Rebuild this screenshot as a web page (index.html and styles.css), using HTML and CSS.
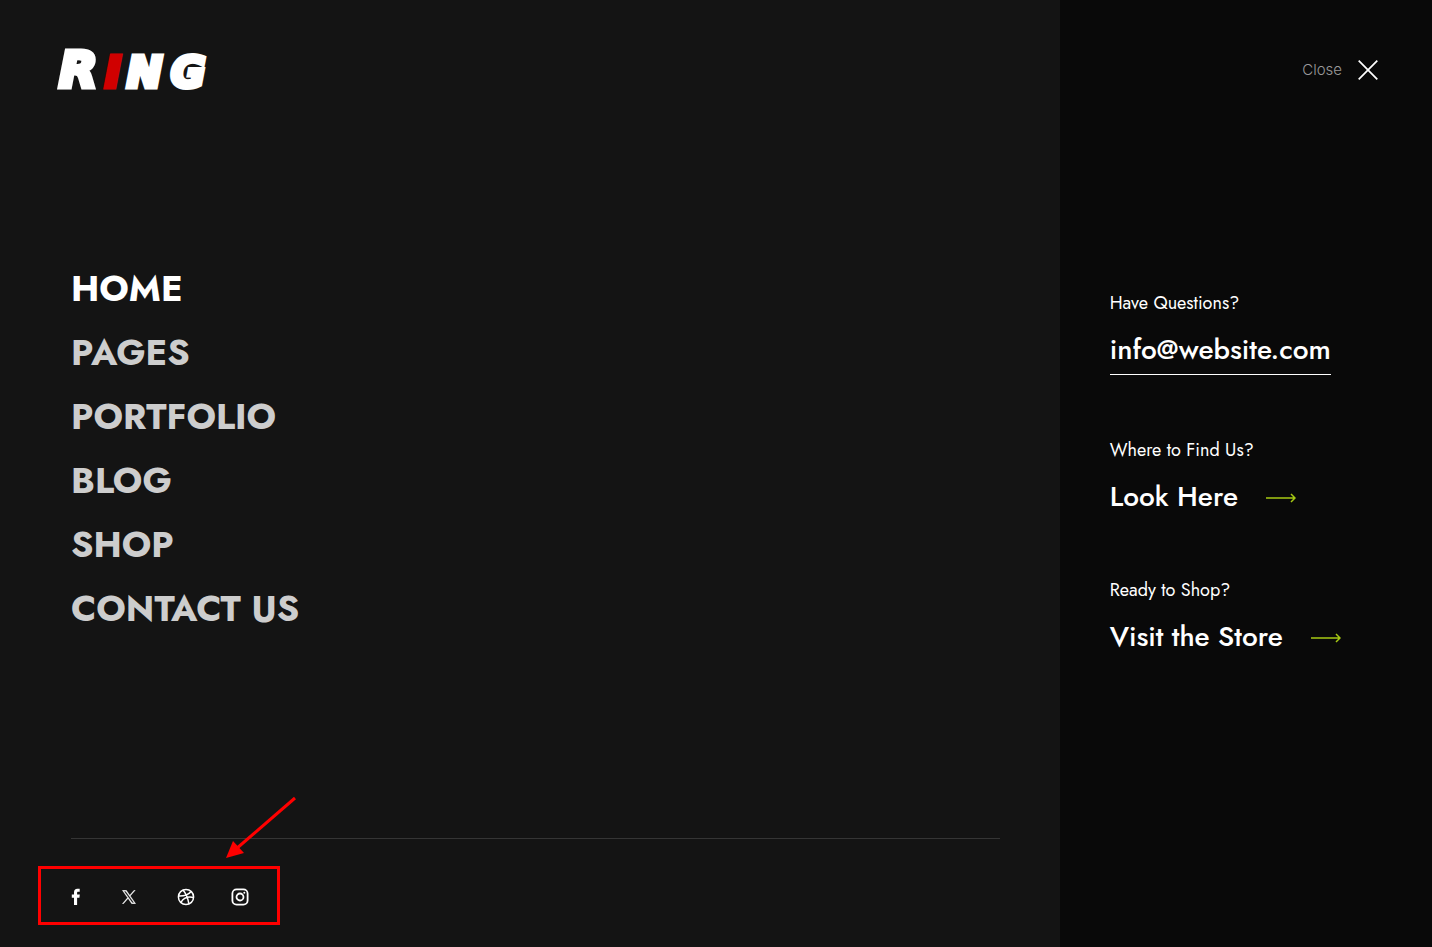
FILE: index.html
```html
<!DOCTYPE html>
<html lang="en">
<head>
<meta charset="utf-8">
<meta name="viewport" content="width=device-width, initial-scale=1">
<title>Ring</title>
<link rel="stylesheet" href="styles.css">
</head>
<body>
<div class="overlay">
  <main class="panel">
    <a class="logo" href="#" aria-label="Ring">
      <svg width="160" height="44" viewBox="0 0 160 44">
        <g class="logo-letters">
          <text class="logo-big" x="4" y="39">R</text>
          <text class="logo-small" x="72" y="39">N</text>
          <text class="logo-small" x="116" y="39">G</text>
          <text class="logo-small logo-red" x="50" y="39">I</text>
        </g>
      </svg>
    </a>
    <nav class="menu">
      <a class="menu-link active" href="#">HOME</a>
      <a class="menu-link" href="#">PAGES</a>
      <a class="menu-link" href="#">PORTFOLIO</a>
      <a class="menu-link" href="#">BLOG</a>
      <a class="menu-link" href="#">SHOP</a>
      <a class="menu-link" href="#">CONTACT US</a>
    </nav>
    <footer class="footer">
      <a class="social" href="#" aria-label="Facebook">
        <svg width="10" height="18" viewBox="0 0 10 18"><path fill="#fff" d="M3 17V9.800H.8V6.500H3V4.500C3 1.900 4.300.8 6.300.8h2.400v3H7.300C6.300 3.800 6.100 4.200 6.100 5v1.500h2.700l-.4 3.300H6.100V17z"/></svg>
      </a>
      <a class="social" href="#" aria-label="X">
        <svg width="14" height="14" viewBox="0 0 24 24"><path fill="#fff" stroke="#fff" stroke-width=".6" d="M14.200 10.200 22.700.5h-2L13.300 8.900 7.400.5H.6l8.900 12.800L.6 23.500h2l7.800-8.900 6.200 8.900h6.800zM3.300 2h3.100l14.300 20h-3.100z"/></svg>
      </a>
      <a class="social" href="#" aria-label="Dribbble">
        <svg width="18" height="18" viewBox="0 0 18 18" fill="none" stroke="#fff" stroke-width="1.500"><circle cx="9" cy="9" r="7.600"/><path d="M6 2.100C8.500 5 10.800 9.500 11.900 15.900M1.500 7.900c5 .2 9.600-.8 12.700-4.500M3.900 14.500C6.500 9.800 11 8.200 16.600 9.500"/></svg>
      </a>
      <a class="social" href="#" aria-label="Instagram">
        <svg width="18" height="18" viewBox="0 0 18 18" fill="none" stroke="#fff" stroke-width="1.800"><rect x="1.400" y="1.400" width="15.200" height="15.200" rx="4.200"/><circle cx="9" cy="9" r="3.500"/><circle cx="13.300" cy="4.700" r="1" fill="#fff" stroke="none"/></svg>
      </a>
      <div class="callout"></div>
      <svg class="pointer" width="72" height="64" viewBox="0 0 72 64"><path d="M70 2 11 53" stroke="#f00" stroke-width="3"/><path fill="#f00" d="M1 62 8 45l11 12z"/></svg>
    </footer>
  </main>
  <aside class="side">
    <button class="close" type="button">
      <span>Close</span>
      <svg width="20" height="20" viewBox="0 0 20 20"><path d="M.7.700 19.300 19.300M19.300.7.700 19.300" stroke="#fff" stroke-width="1.700"/></svg>
    </button>
    <div class="contacts">
      <section>
        <p class="label">Have Questions?</p>
        <a class="big underlined" href="mailto:info@website.com">info@website.com</a>
      </section>
      <section>
        <p class="label">Where to Find Us?</p>
        <a class="big" href="#">Look Here
          <svg width="30" height="12" viewBox="0 0 30 12"><path class="arrow" d="M0 7h29M25 3l4 4-4 4"/></svg></a>
      </section>
      <section>
        <p class="label">Ready to Shop?</p>
        <a class="big" href="#">Visit the Store
          <svg width="30" height="12" viewBox="0 0 30 12"><path class="arrow" d="M0 7h29M25 3l4 4-4 4"/></svg></a>
      </section>
    </div>
  </aside>
</div>
</body>
</html>
```
FILE: styles.css
```css
* { box-sizing: border-box; }
body {
  margin: 0;
  background: #141414;
  color: #fff;
  font-family: Jost, Lato, sans-serif;
}
a { color: inherit; text-decoration: none; }
svg { display: block; flex: none; }
.overlay {
  display: grid;
  grid-template-columns: minmax(0, 74fr) minmax(0, 26fr);
  min-height: 100vh;
}
.panel {
  display: flex;
  flex-direction: column;
  padding: 48px 60px 0 71px;
}
.logo { align-self: flex-start; margin-left: -16px; }
.logo svg { overflow: visible; }
.logo-letters {
  fill: #fff;
  stroke: #fff;
  stroke-width: 5;
  font-family: "DejaVu Sans", sans-serif;
  font-weight: 700;
  font-style: italic;
}
.logo-big { font-size: 50px; }
.logo-small { font-size: 42px; }
.logo-red { fill: #d00000; stroke: #d00000; }
.menu {
  display: flex;
  flex-direction: column;
  align-items: flex-start;
  margin: 164px 0 48px;
}
.menu-link {
  font-size: 36px;
  line-height: 64px;
  font-weight: 700;
  color: #cdcdcd;
}
.menu-link.active { color: #fff; }
.footer {
  position: relative;
  display: grid;
  grid-template-columns: 51px 55px 54px 18px;
  align-items: center;
  margin-top: auto;
  height: 109px;
  border-top: 1px solid #353535;
  padding-top: 8px;
}
.social { display: flex; }
.callout {
  position: absolute;
  left: -33px;
  top: 27px;
  width: 242px;
  height: 59px;
  border: 3px solid #f00;
}
.pointer { position: absolute; left: 154px; top: -43px; }
.side {
  display: flex;
  flex-direction: column;
  background: #090909;
  padding: 58px 54px 0 50px;
}
.close {
  display: flex;
  align-items: center;
  align-self: flex-end;
  gap: 16px;
  padding: 0;
  border: 0;
  background: none;
  color: #999;
  font: 300 15px/24px Inter, sans-serif;
  cursor: pointer;
}
.contacts {
  display: grid;
  gap: 60px;
  margin-top: 206px;
}
.label { margin: 0 0 14px; font-size: 18px; line-height: 30px; }
.big {
  display: inline-flex;
  align-items: center;
  gap: 28px;
  font-size: 28px;
  line-height: 36px;
  font-weight: 500;
  white-space: nowrap;
}
.underlined { padding-bottom: 6px; border-bottom: 1px solid #fff; }
.arrow { fill: none; stroke: #a6c913; stroke-width: 1.500; }
```
